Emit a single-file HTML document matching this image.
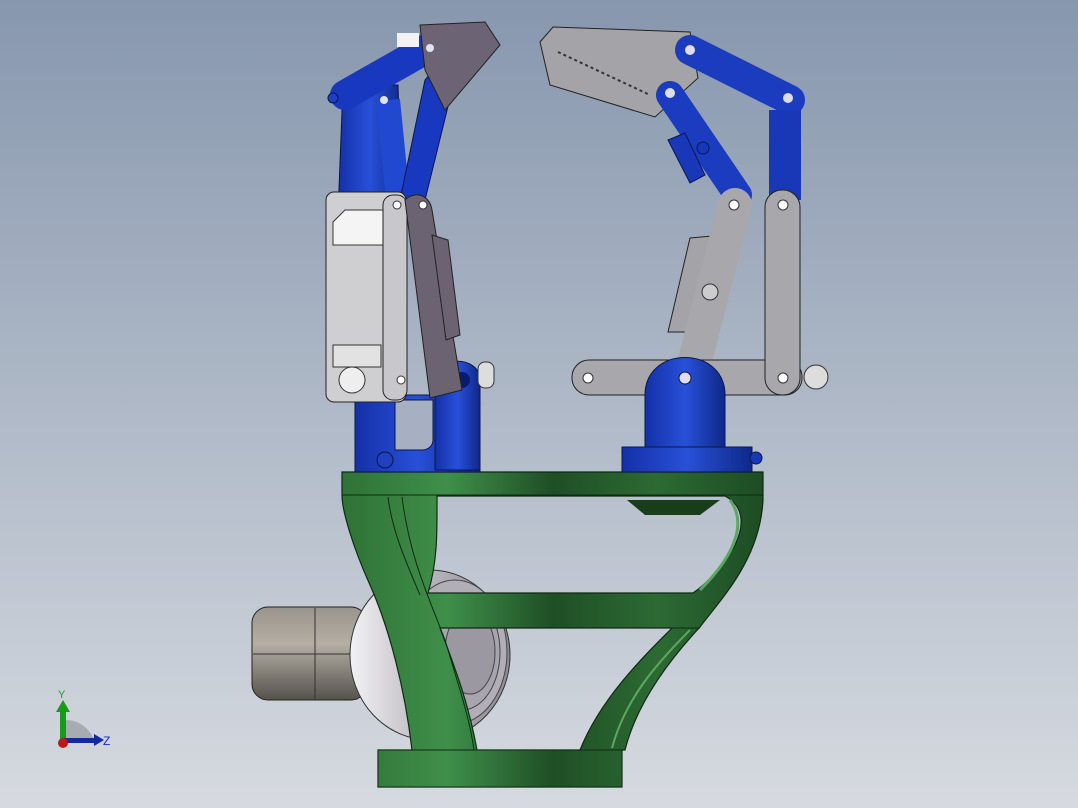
<!DOCTYPE html>
<html><head><meta charset="utf-8"><style>
html,body{margin:0;padding:0;width:1078px;height:808px;overflow:hidden}
svg{display:block}
text{font-family:"Liberation Sans",sans-serif}
</style></head><body>
<svg width="1078" height="808" viewBox="0 0 1078 808" xmlns="http://www.w3.org/2000/svg">
<defs>
<linearGradient id="bg" x1="0" y1="0" x2="0" y2="1"><stop offset="0" stop-color="#8797ae"/><stop offset="1" stop-color="#d6dae0"/></linearGradient>
<linearGradient id="gr" x1="342" y1="0" x2="763" y2="0" gradientUnits="userSpaceOnUse"><stop offset="0" stop-color="#2f7236"/><stop offset=".25" stop-color="#3f8f4a"/><stop offset=".5" stop-color="#1f4f25"/><stop offset=".75" stop-color="#2c6a33"/><stop offset="1" stop-color="#1e4c24"/></linearGradient>
<linearGradient id="bl" x1="0" y1="0" x2="1" y2="0"><stop offset="0" stop-color="#1430a8"/><stop offset=".5" stop-color="#2850d8"/><stop offset="1" stop-color="#0f2888"/></linearGradient>
<linearGradient id="mt" x1="0" y1="0" x2="0" y2="1"><stop offset="0" stop-color="#9a958c"/><stop offset=".4" stop-color="#b4aea4"/><stop offset="1" stop-color="#55524c"/></linearGradient>
<linearGradient id="sv" x1="0" y1="0" x2="1" y2="0"><stop offset="0" stop-color="#f2f2f4"/><stop offset=".5" stop-color="#b8b4bc"/><stop offset="1" stop-color="#8e8a94"/></linearGradient>
</defs>
<rect width="1078" height="808" fill="url(#bg)"/>

<!-- motor -->
<rect x="252" y="607" width="115" height="93" rx="16" fill="url(#mt)" stroke="#222" stroke-width="1"/>
<line x1="315" y1="608" x2="315" y2="699" stroke="#333"/>
<line x1="253" y1="654" x2="360" y2="654" stroke="#333"/>
<ellipse cx="430" cy="655" rx="80" ry="85" fill="url(#sv)" stroke="#333"/>
<ellipse cx="455" cy="652" rx="52" ry="72" fill="#b2aeb8" stroke="#444"/>
<ellipse cx="462" cy="652" rx="38" ry="58" fill="#a8a4ae" stroke="#444"/>
<ellipse cx="470" cy="652" rx="25" ry="42" fill="#9c98a2" stroke="#444"/>

<!-- green frame -->
<path fill-rule="evenodd" d="M342 472 L763 472 L763 500 C760 560 720 600 700 627 C660 670 635 710 625 750 L622 750 L622 787 L378 787 L378 750 L412 750 C405 690 390 630 370 585 C352 545 342 510 342 495 Z
M437 496 L725 496 C742 505 746 522 735 545 C722 568 705 585 693 593 L428 593 C438 560 437 530 437 496 Z
M440 628 L672 628 C640 660 600 700 580 750 L477 750 C468 700 452 660 440 628 Z" fill="url(#gr)" stroke="#0f2a14" stroke-width="1.2"/>
<line x1="342" y1="495" x2="763" y2="495" stroke="#0f2a14"/>
<rect x="378" y="750" width="244" height="37" fill="url(#gr)" stroke="#0f2a14"/>
<line x1="428" y1="593" x2="693" y2="593" stroke="#0f2a14"/>
<line x1="440" y1="628" x2="700" y2="628" stroke="#0f2a14"/>
<path d="M402 497 C410 560 430 600 445 640 C460 690 470 720 474 750" stroke="#0f2a14" fill="none"/>
<path d="M388 497 C392 530 405 560 420 595" stroke="#0f2a14" fill="none"/>
<path d="M627 500 L720 500 L700 515 L645 515 Z" fill="#183c1c"/>
<path d="M730 500 C745 520 740 550 700 590" stroke="#5aa862" stroke-width="3" fill="none"/>
<path d="M690 630 C655 665 625 700 612 748" stroke="#5aa862" stroke-width="2" fill="none"/>

<!-- left finger -->
<rect x="355" y="395" width="125" height="77" fill="url(#bl)" stroke="#0a1650"/>
<path d="M435 470 L435 380 C435 355 480 355 480 380 L480 470 Z" fill="url(#bl)" stroke="#0a1650"/>
<path d="M395 400 L433 400 L433 440 C433 446 428 450 422 450 L395 450 Z" fill="#a6b0c2" stroke="#0a1650"/>
<circle cx="385" cy="460" r="8" fill="#2040c0" stroke="#0a1650"/>
<circle cx="462" cy="380" r="8" fill="#0a1a70"/>
<rect x="478" y="362" width="16" height="26" rx="7" fill="#ddd" stroke="#333"/>
<!-- blue upper -->
<path d="M343 85 L398 85 L402 215 L338 215 Z" fill="url(#bl)" stroke="#0a1650"/>
<line x1="345" y1="95" x2="428" y2="48" stroke="#1838c0" stroke-width="30" stroke-linecap="round"/>
<line x1="388" y1="100" x2="398" y2="200" stroke="#2048d0" stroke-width="24"/>
<path d="M425 80 C440 60 458 70 452 90 L425 200 L400 200 Z" fill="#1838c0" stroke="#0a1650"/>
<path d="M420 25 L485 22 L500 45 L445 110 L425 70 Z" fill="#6c6474" stroke="#222"/>
<rect x="397" y="33" width="22" height="14" fill="#f2f2f2"/>
<circle cx="333" cy="98" r="5" fill="#2040c0" stroke="#0a1650"/>
<circle cx="430" cy="48" r="4" fill="#e0e4f0"/>
<circle cx="384" cy="100" r="4" fill="#e0e4f0"/>
<!-- gray body -->
<rect x="326" y="192" width="80" height="210" rx="8" fill="#cfcfd2" stroke="#222"/>
<path d="M333 222 L345 210 L383 210 L383 245 L333 245 Z" fill="#f4f4f4" stroke="#333"/>
<rect x="333" y="345" width="48" height="22" fill="#e2e2e2" stroke="#333"/>
<circle cx="352" cy="380" r="13" fill="#eee" stroke="#333"/>
<rect x="383" y="195" width="24" height="205" rx="10" fill="#c8c8cc" stroke="#222"/>
<path d="M405 200 C415 190 430 195 432 210 L462 390 L430 398 Z" fill="#6b6272" stroke="#222"/>
<path d="M432 235 L448 240 L460 335 L446 340 Z" fill="#6b6272" stroke="#222"/>
<circle cx="397" cy="205" r="4" fill="#fff" stroke="#333"/>
<circle cx="401" cy="380" r="4" fill="#fff" stroke="#333"/>
<circle cx="423" cy="205" r="4" fill="#fff" stroke="#333"/>

<!-- right finger -->
<path d="M540 42 L553 27 L690 32 L698 78 L655 117 L550 85 Z" fill="#a4a4a8" stroke="#222"/>
<path d="M558 52 L650 95" stroke="#333" stroke-dasharray="3 3" stroke-width="2"/>
<line x1="690" y1="50" x2="790" y2="100" stroke="#1c3cc0" stroke-width="30" stroke-linecap="round"/>
<line x1="785" y1="110" x2="785" y2="200" stroke="#1838b8" stroke-width="32"/>
<line x1="670" y1="95" x2="738" y2="195" stroke="#1c3cc0" stroke-width="28" stroke-linecap="round"/>
<path d="M668 140 L685 133 L705 175 L690 183 Z" fill="#1838b8" stroke="#0a1650"/>
<circle cx="690" cy="50" r="5" fill="#dde"/><circle cx="788" cy="98" r="5" fill="#dde"/>
<circle cx="670" cy="93" r="5" fill="#dde"/><circle cx="703" cy="148" r="6" fill="#1838b8" stroke="#0a1650"/>
<path d="M690 238 L712 236 L690 332 L668 332 Z" fill="#a4a4a8" stroke="#222"/>
<line x1="735" y1="205" x2="695" y2="360" stroke="#a8a8ac" stroke-width="34" stroke-linecap="round"/>
<circle cx="710" cy="292" r="8" fill="#ccc" stroke="#333"/>
<rect x="572" y="360" width="230" height="35" rx="17" fill="#a8a8ac" stroke="#222"/>
<rect x="765" y="190" width="35" height="205" rx="17" fill="#a8a8ac" stroke="#222"/>
<circle cx="783" cy="205" r="5" fill="#fff" stroke="#333"/><circle cx="783" cy="378" r="5" fill="#fff" stroke="#333"/>
<circle cx="588" cy="378" r="5" fill="#fff" stroke="#333"/><circle cx="734" cy="205" r="5" fill="#fff" stroke="#333"/>
<circle cx="816" cy="377" r="12" fill="#ddd" stroke="#333"/>
<path d="M645 450 L645 395 C645 345 725 345 725 395 L725 450 Z" fill="url(#bl)" stroke="#0a1650"/>
<rect x="622" y="447" width="130" height="25" fill="url(#bl)" stroke="#0a1650"/>
<circle cx="685" cy="378" r="6" fill="#dde" stroke="#0a1650"/>
<circle cx="756" cy="458" r="6" fill="#1838b8" stroke="#0a1650"/>

<!-- axis triad -->
<path d="M64 740 L64 720 A30 30 0 0 1 94 740 Z" fill="#a8acb2"/>
<rect x="60" y="710" width="6" height="32" fill="#1a9a1a"/>
<path d="M56 712 L63 700 L70 712 Z" fill="#1a9a1a"/>
<rect x="64" y="738" width="32" height="5" fill="#1428a0"/>
<path d="M94 734 L104 740 L94 746 Z" fill="#1428a0"/>
<circle cx="63" cy="743" r="5" fill="#c01818"/>
<text x="58" y="698" font-size="11" fill="#1aa01a">Y</text>
<text x="103" y="745" font-size="12" fill="#1428d0">Z</text>
</svg>
</body></html>
